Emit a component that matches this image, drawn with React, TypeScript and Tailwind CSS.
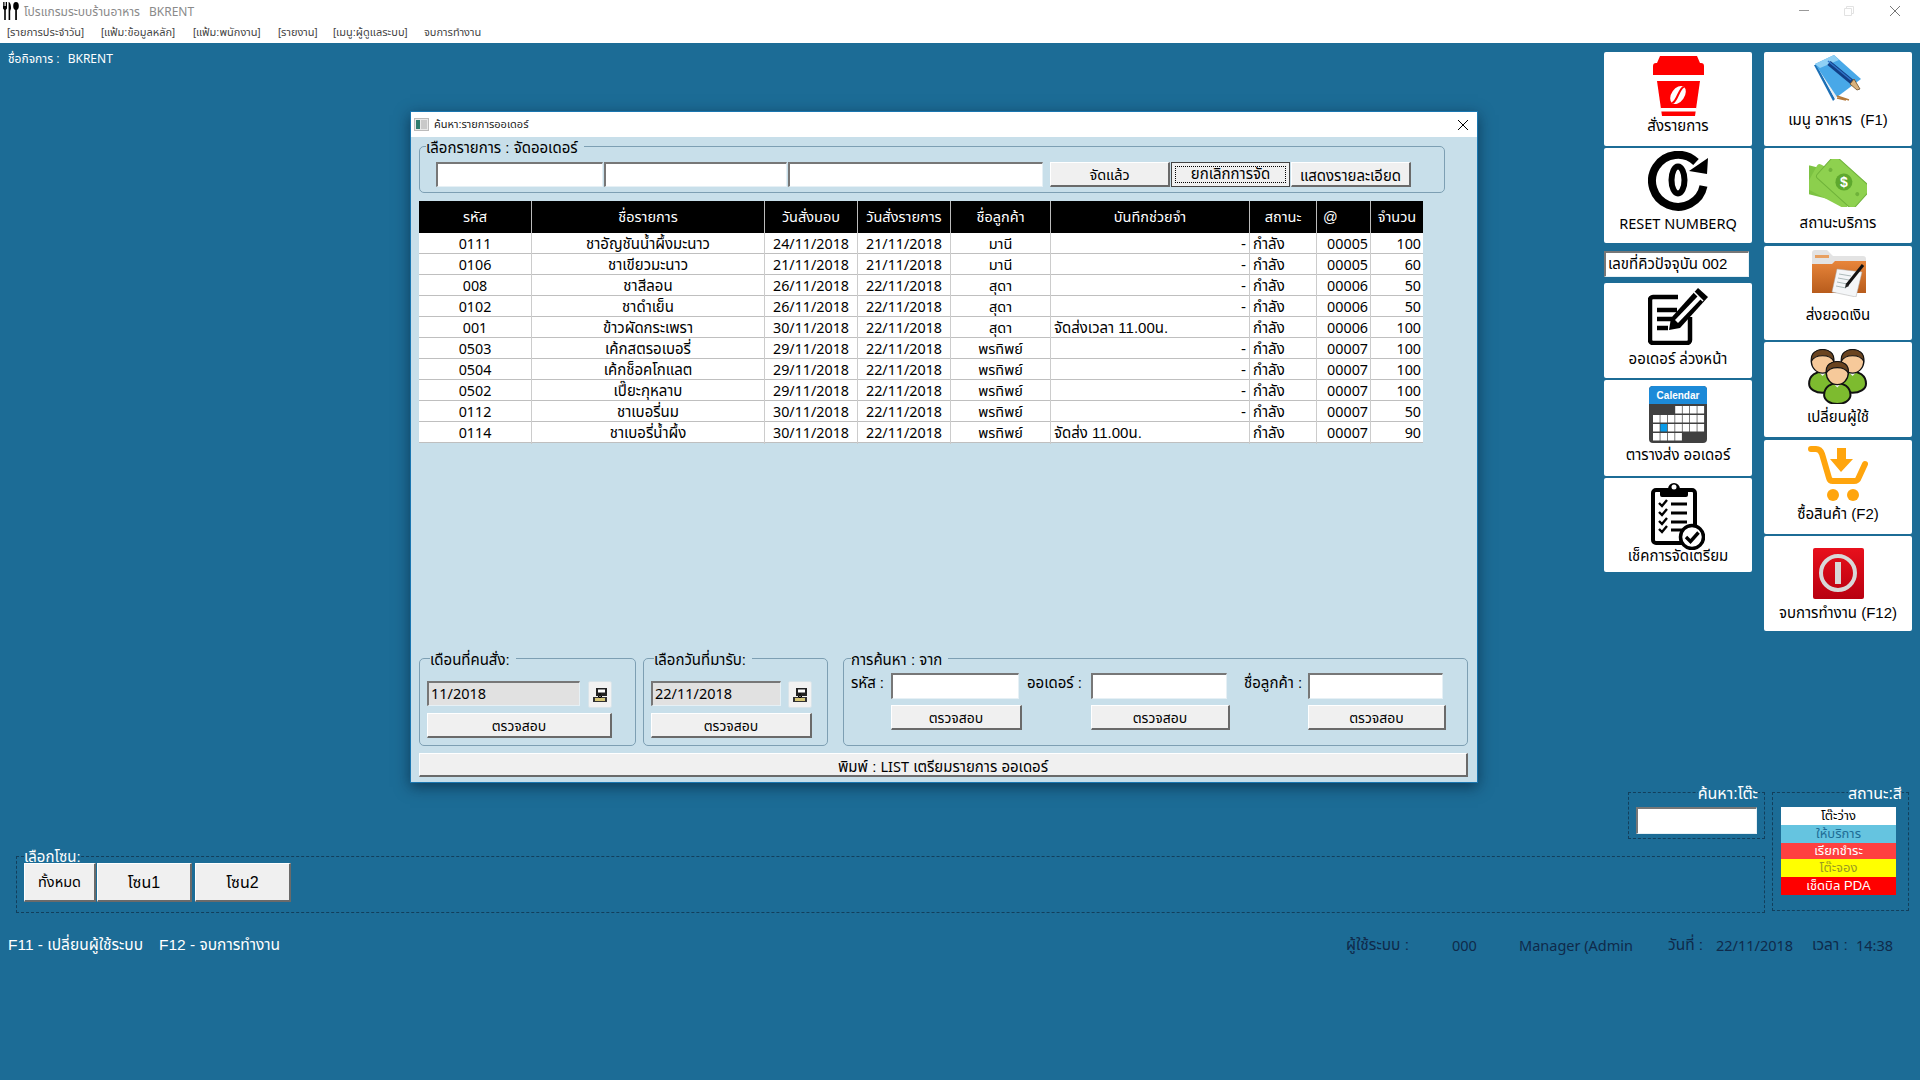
import type { ReactNode } from "react";

const FONT = "font-['Liberation_Sans','Noto_Sans_Thai','Noto_Sans',sans-serif]";
const LATIN = "font-['Noto_Sans','Noto_Sans_Thai',sans-serif]";

const sunken =
  "border-t-2 border-l-2 border-r border-b border-t-[#777] border-l-[#777] border-r-[#e6f0f5] border-b-[#e6f0f5]";
const raised =
  "pt-[2px] border-t border-l border-r-2 border-b-2 border-t-white border-l-white border-r-[#6a6a6a] border-b-[#6a6a6a] bg-[#f0f0f0]";

const menus = [
  { label: "[รายการประจำวัน]", w: "w-[94px]" },
  { label: "[แฟ้ม:ข้อมูลหลัก]", w: "w-[92px]" },
  { label: "[แฟ้ม:พนักงาน]", w: "w-[85px]" },
  { label: "[รายงาน]", w: "w-[55px]" },
  { label: "[เมนู:ผู้ดูแลระบบ]", w: "w-[91px]" },
  { label: "จบการทำงาน", w: "w-[70px]" },
];

const columns = "grid grid-cols-[113px_233px_93px_93px_100px_199px_67px_54px_52px]";

const rows = [
  ["0111", "ชาอัญชันน้ำผึ้งมะนาว", "24/11/2018", "21/11/2018", "มานี", "", "00005", "100"],
  ["0106", "ชาเขียวมะนาว", "21/11/2018", "21/11/2018", "มานี", "", "00005", "60"],
  ["008", "ชาสีลอน", "26/11/2018", "22/11/2018", "สุดา", "", "00006", "50"],
  ["0102", "ชาดำเย็น", "26/11/2018", "22/11/2018", "สุดา", "", "00006", "50"],
  ["001", "ข้าวผัดกระเพรา", "30/11/2018", "22/11/2018", "สุดา", "จัดส่งเวลา 11.00น.", "00006", "100"],
  ["0503", "เค้กสตรอเบอรี่", "29/11/2018", "22/11/2018", "พรทิพย์", "", "00007", "100"],
  ["0504", "เค้กช็อคโกแลต", "29/11/2018", "22/11/2018", "พรทิพย์", "", "00007", "100"],
  ["0502", "เปี๊ยะกุหลาบ", "29/11/2018", "22/11/2018", "พรทิพย์", "", "00007", "100"],
  ["0112", "ชาเบอรี่นม", "30/11/2018", "22/11/2018", "พรทิพย์", "", "00007", "50"],
  ["0114", "ชาเบอรี่น้ำผึ้ง", "30/11/2018", "22/11/2018", "พรทิพย์", "จัดส่ง 11.00น.", "00007", "90"],
];

const headers = ["รหัส", "ชื่อรายการ", "วันสั่งมอบ", "วันสั่งรายการ", "ชื่อลูกค้า", "บันทึกช่วยจำ", "สถานะ", "@", "จำนวน"];

function Cross({ className }: { className: string }) {
  return (
    <svg viewBox="0 0 10 10" className={`h-[10px] w-[10px] ${className}`}>
      <path d="M0 0l10 10M10 0 0 10" stroke="currentColor" strokeWidth="1" fill="none" />
    </svg>
  );
}

function CutleryIcon() {
  return (
    <svg viewBox="0 0 16 18" className="h-[18px] w-4 shrink-0" fill="#000">
      <path d="M0 0h.8v4h.7V0h.8v4h.7V0H4v6.500L2.800 8v10H1.200V8L0 6.500z" />
      <path d="M6 0c1.600.8 2 3.500 2 6.500L7.200 9v9H5.600V0z" />
      <ellipse cx="13" cy="4" rx="2.800" ry="4" />
      <rect x="12.200" y="6" width="1.700" height="12" />
    </svg>
  );
}

function CupIcon() {
  return (
    <svg viewBox="0 0 51 60" className="h-[60px] w-[51px]">
      <path fill="#f00" d="M7 0h37l3 7h1a3 3 0 0 1 3 3v9H0v-9a3 3 0 0 1 3-3h1z" />
      <path fill="#f00" d="M4 25h43l-5 35H9z" />
      <rect x="8" y="52" width="35" height="3.500" fill="#fff" />
      <g transform="rotate(35 25 39)">
        <ellipse cx="25" cy="39" rx="6.500" ry="10" fill="#fff" />
        <path d="M25 29c-3 5 3 15 0 20" stroke="#f00" strokeWidth="2" fill="none" />
      </g>
    </svg>
  );
}

function BookIcon() {
  return (
    <svg viewBox="0 0 48 46" className="h-[46px] w-12">
      <path fill="#1c6fb5" d="M0 10 19 46l2-2L3 10z" />
      <path fill="#e8eef2" d="M3 11 21 44l2-3L6 10z" />
      <path fill="#48a8e8" d="M1 9 20 0l27 24-24 18z" />
      <path fill="#8fd0f5" d="M1 9 20 0l5 5L6 13z" />
      <path stroke="#123f86" strokeWidth="5" d="M15 8 38 27" />
      <path stroke="#2f74c8" strokeWidth="1.500" d="M14 6 37 25" />
      <path fill="#d9b27c" stroke="#6b4a22" strokeWidth=".8" d="m36 29 4-5 6 10-3 1z" />
      <path stroke="#b5793a" strokeWidth="1.500" d="m23 41 12 4M23 43l9 2" />
    </svg>
  );
}

function ResetIcon() {
  return (
    <svg viewBox="0 0 60 60" className="h-[60px] w-[60px]">
      <path d="M55.500 35A26 26 0 1 1 48 11" fill="none" stroke="#000" strokeWidth="8" />
      <path d="M60 7 59 23 41 20z" />
      <ellipse cx="30" cy="29" rx="6.500" ry="13.500" fill="none" stroke="#000" strokeWidth="6" />
    </svg>
  );
}

function MoneyIcon() {
  return (
    <svg viewBox="0 0 58 48" className="h-12 w-[58px]">
      <g transform="rotate(42 30 24)">
        <rect x="-2" y="20" width="46" height="28" rx="3" fill="#7cc242" transform="rotate(-28 20 34)" />
        <rect x="4" y="17" width="46" height="28" rx="3" fill="#8ccf4d" transform="rotate(-14 27 31)" />
        <rect x="8" y="6" width="50" height="29" rx="3" fill="#8ed14f" stroke="#6fb23a" />
        <circle cx="33" cy="20" r="8.500" fill="#5ea82e" />
        <circle cx="15" cy="20" r="2" fill="#6fb23a" />
        <circle cx="51" cy="20" r="2" fill="#6fb23a" />
        <text x="33" y="25" textAnchor="middle" fontSize="14" fontWeight="700" fill="#fff" transform="rotate(-42 33 20)">
          $
        </text>
      </g>
    </svg>
  );
}

function FolderIcon() {
  return (
    <svg viewBox="0 0 55 47" className="h-[47px] w-[55px]">
      <defs>
        <linearGradient id="folder" x1="0" y1="0" x2="0" y2="1">
          <stop offset="0" stopColor="#e8853a" />
          <stop offset="1" stopColor="#b85c1c" />
        </linearGradient>
      </defs>
      <path fill="#e3e3e3" d="M1 3a3 3 0 0 1 3-3h12l6 6h30a3 3 0 0 1 3 3v10H1z" />
      <rect x="4" y="5" width="14" height="3" fill="#e8a060" />
      <path fill="url(#folder)" d="M1 14h20l3-3h31v32H1z" />
      <path fill="#f4f6f8" stroke="#aaa" strokeWidth=".5" d="m26 19 25 3-6 25-24-5z" />
      <path stroke="#9aa" strokeWidth=".8" d="m28 24 12 2M27 28l11 2M26 32l10 2M25 36l10 2" />
      <path stroke="#111" strokeWidth="3" d="M52 15 36 35" />
      <path d="m35 33 3 3-4 2z" fill="#222" />
    </svg>
  );
}

function EditIcon() {
  return (
    <svg viewBox="0 0 60 57" className="h-[57px] w-[60px]">
      <path d="M30 9H5a3 3 0 0 0-3 3v40a3 3 0 0 0 3 3h34a3 3 0 0 0 3-3V29" fill="none" stroke="#000" strokeWidth="4.500" />
      <path d="M9 22h20M9 31h15M9 40h11" stroke="#000" strokeWidth="4.500" />
      <path d="M50 0 60 9 32 40 21 42l2-12z" fill="#000" />
      <path d="M27 32 50 8l3 3-23 24z" fill="#fff" />
      <path d="M46 4 55 13" stroke="#fff" strokeWidth="1.500" />
    </svg>
  );
}

function CalendarIcon() {
  const cells = [
    [0, 0, 0, 1, 1, 1, 1],
    [1, 1, 1, 1, 1, 1, 1],
    [1, 2, 1, 1, 1, 1, 1],
    [1, 1, 1, 1, 0, 0, 0],
  ];
  return (
    <svg viewBox="0 0 58 57" className="h-[57px] w-[58px]">
      <rect width="58" height="57" rx="4" fill="#404040" />
      <path d="M0 18V4a4 4 0 0 1 4-4h50a4 4 0 0 1 4 4v14z" fill="#1c8ad8" />
      <text x="29" y="13" textAnchor="middle" fontSize="10" fontWeight="700" fill="#fff" fontFamily="Liberation Sans, sans-serif">
        Calendar
      </text>
      {cells.map((row, r) =>
        row.map((c, i) =>
          c ? (
            <rect
              key={`${r}-${i}`}
              x={4 + i * 7.4}
              y={20 + r * 9}
              width="6.700"
              height="7.500"
              fill={c === 2 ? "#0a9be8" : "#fff"}
            />
          ) : null,
        ),
      )}
    </svg>
  );
}

function Person({ x, y, s = 1 }: { x: number; y: number; s?: number }) {
  return (
    <g transform={`translate(${x} ${y}) scale(${s})`}>
      <path d="M1 31c0-8 7-11 12-11s12 3 12 11c0 5-6 8-12 8S1 36 1 31z" fill="#7dbb2f" stroke="#111" strokeWidth="1.800" />
      <path d="m9 20 4 4 4-4z" fill="#f4f4f4" />
      <ellipse cx="13" cy="11" rx="10" ry="10.500" fill="#f6c99a" stroke="#111" strokeWidth="1.200" />
      <path d="M3 11C2 3 8 .5 13 .5S24 3 23 11c-2-4-5-5-10-5S5 7 3 11z" fill="#6a4420" stroke="#111" strokeWidth="1" />
    </g>
  );
}

function UsersIcon() {
  return (
    <svg viewBox="0 0 60 55" className="h-[55px] w-[60px]">
      <Person x={0} y={0} s={1.12} />
      <Person x={30} y={0} s={1.12} />
      <Person x={15} y={12} s={1.1} />
    </svg>
  );
}

function CartIcon() {
  return (
    <svg viewBox="0 0 60 57" className="h-[57px] w-[60px]">
      <path d="M3 4h5c3 0 5 2 6 5l7 24a4 4 0 0 0 4 3h21c3 0 4-1 5-4l6-13" fill="none" stroke="#ffa50d" strokeWidth="6" strokeLinecap="round" />
      <path d="M29 3h9v11h7L33 27 22 14h7z" fill="#ffa50d" />
      <circle cx="25" cy="50" r="6" fill="#ffa50d" />
      <circle cx="45" cy="50" r="6" fill="#ffa50d" />
    </svg>
  );
}

function ChecklistIcon() {
  return (
    <svg viewBox="0 0 54 69" className="h-[69px] w-[54px]">
      <rect x="2" y="9" width="42" height="53" rx="3" fill="#fff" stroke="#000" strokeWidth="4" />
      <path d="M9 14V8h8a6 6 0 0 1 12 0h8v6a2 2 0 0 1-2 2H11a2 2 0 0 1-2-2z" fill="#000" />
      <circle cx="23" cy="6" r="2.500" fill="#fff" />
      {[22, 31, 40, 48].map((y) => (
        <g key={y}>
          <path d={`m8 ${y} 3 3 5-6`} fill="none" stroke="#000" strokeWidth="2.400" />
          <path d={`M20 ${y + 1}h16`} stroke="#000" strokeWidth="3" />
        </g>
      ))}
      <circle cx="41" cy="56" r="11.500" fill="#fff" stroke="#000" strokeWidth="3.500" />
      <path d="m35 56 4.500 4.500 8-9" fill="none" stroke="#000" strokeWidth="3.400" />
    </svg>
  );
}

function PowerIcon() {
  return (
    <svg viewBox="0 0 53 53" className="h-[53px] w-[53px]">
      <defs>
        <linearGradient id="power" x1="0" y1="0" x2="0" y2="1">
          <stop offset="0" stopColor="#e8101c" />
          <stop offset="1" stopColor="#b80010" />
        </linearGradient>
      </defs>
      <rect x="1" y="1" width="51" height="51" rx="2" fill="url(#power)" />
      <circle cx="26" cy="26" r="17" fill="none" stroke="#d8d8d8" strokeWidth="4" />
      <rect x="23" y="15" width="6" height="22" fill="#d8d8d8" />
    </svg>
  );
}

function CalendarPick() {
  return (
    <svg viewBox="0 0 16 16" className="h-4 w-4">
      <rect x="4" y="1" width="11" height="8" fill="#222" />
      <rect x="6" y="2.500" width="7" height="3" fill="#fff" />
      <path d="M1 10h14v5H1z" fill="#333" />
      <rect x="3" y="11" width="10" height="3" fill="#d8c878" />
      <path d="M8 6v5M6 9l2 2 2-2" stroke="#000" fill="none" />
    </svg>
  );
}

function Tile({ icon, label, className }: { icon: ReactNode; label: string; className: string }) {
  return (
    <button
      type="button"
      className={`flex w-[148px] flex-col items-center justify-start rounded-[2px] bg-white text-[15px] leading-5 text-black ${className}`}
    >
      {icon}
      <span className="whitespace-pre">{label}</span>
    </button>
  );
}

function GroupBox({
  title,
  className,
  legend,
  children,
}: {
  title: string;
  className: string;
  legend: string;
  children: ReactNode;
}) {
  return (
    <fieldset className={`rounded-[5px] border border-[#7d9fb3] ${className}`}>
      <legend className={`h-5 pr-[6px] text-[15px] leading-[23px] text-black ${legend}`}>{title}</legend>
      {children}
    </fieldset>
  );
}

function DateField({ value }: { value: string }) {
  return <div className={`h-[25px] bg-[#e1e1e1] pl-[2px] text-[14.500px] leading-[21px] ${LATIN} ${sunken}`}>{value}</div>;
}

function PickButton() {
  return (
    <button type="button" className="ml-auto flex h-[27px] w-6 items-center justify-center rounded-[2px] border border-[#d8e4ea] bg-[#f2f2f2]">
      <CalendarPick />
    </button>
  );
}

function CheckButton({ className }: { className: string }) {
  return (
    <button type="button" className={`h-[25px] text-[14px] leading-5 text-black ${raised} ${className}`}>
      ตรวจสอบ
    </button>
  );
}

function OrderDialog() {
  return (
    <section className="absolute left-[410px] top-[111px] flex h-[672px] w-[1068px] flex-col border border-[#1a76b0] bg-[#c8dfea] shadow-[0_4px_14px_rgba(0,20,40,0.55)]">
      <header className="flex h-[25px] shrink-0 items-center bg-white pl-[3px]">
        <svg viewBox="0 0 15 13" className="h-[13px] w-[15px]">
          <rect x=".5" y=".5" width="14" height="12" fill="#e8e8e8" stroke="#bbb" />
          <rect x="2" y="2" width="4" height="9" fill="#2f7d6e" />
          <rect x="7" y="2" width="6" height="9" fill="#c9c9c9" />
        </svg>
        <span className="ml-[5px] text-[11px] text-[#222]">ค้นหา:รายการออเดอร์</span>
        <Cross className="ml-auto mr-[9px] text-black" />
      </header>

      <div className="flex flex-1 flex-col px-[8px]">
        <GroupBox title="เลือกรายการ : จัดออเดอร์" legend="-ml-[10px]" className="-mt-px w-[1026px] pb-[5px] pl-4 pt-[6px]">
          <div className="flex">
            <div className={`h-[25px] w-[167px] bg-white ${sunken}`} />
            <div className={`ml-px h-[25px] w-[183px] bg-white ${sunken}`} />
            <div className={`ml-px h-[25px] w-[255px] bg-white ${sunken}`} />
            <button type="button" className={`ml-[7px] h-[25px] w-[120px] text-[14.500px] text-black ${raised}`}>
              จัดแล้ว
            </button>
            <button type="button" className="ml-px flex h-[25px] w-[119px] items-center justify-center border border-[#444] bg-[#f0f0f0] p-[3px] text-[15px] text-black">
              <span className="flex h-full w-full items-center justify-center border border-dotted border-black">ยกเลิกการจัด</span>
            </button>
            <button type="button" className={`ml-px h-[25px] w-[120px] whitespace-nowrap text-[15px] text-black ${raised}`}>
              แสดงรายละเอียด
            </button>
          </div>
        </GroupBox>

        <div className="mt-2 w-[1004px] text-[15px] leading-[22px]">
          <div className={`${columns} h-[32px] bg-black text-[14.500px] leading-[22px] text-white`}>
            {headers.map((h, i) => (
              <div key={h} className={`flex items-center border-r border-[#bbb] last:border-r-0 ${i === 7 ? "pl-[6px]" : "justify-center"}`}>
                {h}
              </div>
            ))}
          </div>
          {rows.map((r, idx) => {
            const note = r[5];
            return (
              <div key={idx} className={`${columns} h-[21px] border-b border-[#bfbfbf] bg-white text-black`}>
                <div className={`border-r border-[#ccc] text-center text-[14.300px] ${LATIN}`}>{r[0]}</div>
                <div className="border-r border-[#ccc] text-center">{r[1]}</div>
                <div className={`border-r border-[#ccc] text-center text-[14.300px] ${LATIN}`}>{r[2]}</div>
                <div className={`border-r border-[#ccc] text-center text-[14.300px] ${LATIN}`}>{r[3]}</div>
                <div className="border-r border-[#ccc] text-center text-[14.500px]">{r[4]}</div>
                <div className={`border-r border-[#ccc] px-[3px] ${note ? "text-left" : "text-right"}`}>{note || "-"}</div>
                <div className="border-r border-[#ccc] pl-[3px]">กำลัง</div>
                <div className={`border-r border-[#ccc] pr-[2px] text-right text-[14.300px] ${LATIN}`}>{r[6]}</div>
                <div className={`pr-[2px] text-right text-[14.300px] ${LATIN}`}>{r[7]}</div>
              </div>
            );
          })}
        </div>

        <div className="mt-auto flex items-start">
          <GroupBox title="เดือนที่คนสั่ง:" legend="ml-[3px]" className="h-[98px] w-[217px] pl-[7px] pr-[23px] pt-[13px]">
            <div className="grid grid-cols-[153px_1fr] gap-y-[5px]">
              <DateField value="11/2018" />
              <PickButton />
              <CheckButton className="col-span-2" />
            </div>
          </GroupBox>
          <GroupBox title="เลือกวันที่มารับ:" legend="ml-[3px]" className="ml-[7px] h-[98px] w-[185px] pl-[7px] pr-[15px] pt-[13px]">
            <div className="grid grid-cols-[130px_1fr] gap-y-[5px]">
              <DateField value="22/11/2018" />
              <PickButton />
              <CheckButton className="col-span-2" />
            </div>
          </GroupBox>
          <GroupBox title="การค้นหา : จาก" legend="ml-0" className="ml-[15px] h-[98px] w-[625px] pl-[7px] pt-[5px]">
            <div className="grid grid-cols-[40px_131px_69px_139px_78px_138px] gap-y-[6px] text-[15px] text-black">
              <span className="leading-5">รหัส :</span>
              <div className={`h-[26px] w-[128px] bg-white ${sunken}`} />
              <span className="pl-[5px] leading-5">ออเดอร์ :</span>
              <div className={`h-[26px] w-[136px] bg-white ${sunken}`} />
              <span className="pl-[14px] leading-5">ชื่อลูกค้า :</span>
              <div className={`h-[26px] w-[135px] bg-white ${sunken}`} />
              <CheckButton className="col-start-2" />
              <CheckButton className="col-start-4" />
              <CheckButton className="col-start-6" />
            </div>
          </GroupBox>
        </div>

        <button type="button" className={`mb-[5px] mt-[7px] h-6 w-[1049px] text-[15px] leading-5 text-black ${raised}`}>
          พิมพ์ : <span className={`text-[14.500px] ${LATIN}`}>LIST</span> เตรียมรายการ ออเดอร์
        </button>
      </div>
    </section>
  );
}

export default function App() {
  return (
    <div className={`relative flex h-[1080px] w-[1920px] flex-col overflow-hidden bg-[#1c6c96] ${FONT}`}>
      <div className="flex h-[21px] shrink-0 items-center bg-white pl-[3px]">
        <CutleryIcon />
        <span className="ml-[5px] mt-[2px] text-[12px] text-[#8a8a8a]">
          โปรแกรมระบบร้านอาหาร<span className={`ml-[9px] ${LATIN}`}>BKRENT</span>
        </span>
        <div className="ml-auto flex items-center">
          <span className="mr-[35px] h-px w-[10px] bg-[#999]" />
          <svg viewBox="0 0 10 10" className="mr-9 h-[10px] w-[10px]" fill="none" stroke="#e2e2e2">
            <path d="M.5 2.500h7v7h-7zM2.500 2.500v-2h7v7h-2" />
          </svg>
          <Cross className="mr-5 text-[#777]" />
        </div>
      </div>
      <nav className="flex h-[22px] shrink-0 items-center bg-white pl-[7px] text-[11px] text-[#444]">
        {menus.map((m) => (
          <span key={m.label} className={`${m.w} whitespace-nowrap`}>
            {m.label}
          </span>
        ))}
      </nav>

      <main className="flex flex-1 flex-col">
        <div className="flex h-[739px] shrink-0 justify-between pr-2">
          <p className="pl-2 pt-[7px] text-[12px] leading-[18px] text-white">
            ชื่อกิจการ :<span className={`ml-[8px] ${LATIN}`}>BKRENT</span>
          </p>
          <div className="flex gap-3 pt-[9px]">
            <div className="flex flex-col items-start">
              <Tile icon={<CupIcon />} label="สั่งรายการ" className="h-[94px] pt-1" />
              <Tile icon={<ResetIcon />} label="RESET NUMBERQ" className={`mt-[2px] h-[95px] pt-[3px] [&>span]:mt-[2px] [&>span]:text-[14.500px] ${LATIN}`} />
              <div className={`mt-2 h-[26px] w-[145px] bg-white pl-[2px] text-[15px] leading-[22px] text-black ${sunken}`}>
                เลขที่คิวปัจจุบัน 002
              </div>
              <Tile icon={<EditIcon />} label="ออเดอร์ ล่วงหน้า" className="mt-[6px] h-[95px] pt-[5px] [&>span]:mt-1" />
              <Tile icon={<CalendarIcon />} label="ตารางส่ง ออเดอร์" className="mt-[2px] h-[96px] pt-[6px] [&>span]:mt-[2px]" />
              <Tile icon={<ChecklistIcon />} label="เช็คการจัดเตรียม" className="mt-[2px] h-[94px] pt-[3px] [&>span]:-mt-[4px]" />
            </div>
            <div className="flex flex-col">
              <Tile icon={<BookIcon />} label="เมนู อาหาร  (F1)" className="h-[94px] pt-[3px] [&>span]:mt-[9px]" />
              <Tile icon={<MoneyIcon />} label="สถานะบริการ" className="mt-[2px] h-[95px] pt-[11px] [&>span]:mt-[6px]" />
              <Tile icon={<FolderIcon />} label="ส่งยอดเงิน" className="mt-[3px] h-[94px] pt-[4px] [&>span]:mt-2" />
              <Tile icon={<UsersIcon />} label="เปลี่ยนผู้ใช้" className="mt-[2px] h-[95px] pt-[7px] [&>span]:mt-[3px]" />
              <Tile icon={<CartIcon />} label="ซื้อสินค้า (F2)" className="mt-[3px] h-[94px] pt-[5px] [&>span]:mt-[2px]" />
              <Tile icon={<PowerIcon />} label="จบการทำงาน (F12)" className="mt-[2px] h-[95px] pt-[11px] [&>span]:mt-[3px]" />
            </div>
          </div>
        </div>

        <div className="flex pl-4">
          <div className="flex w-[1749px] flex-col">
            <fieldset className="h-[57px] w-[137px] self-end border border-dashed border-[#123f5c] pl-[7px]">
              <legend className="ml-auto mr-[6px] h-5 text-[16px] leading-[23px] text-white">ค้นหา:โต๊ะ</legend>
              <div className={`mt-[5px] h-[27px] w-[121px] bg-white ${sunken}`} />
            </fieldset>
            <fieldset className="mt-[9px] h-[65px] border border-dashed border-[#123f5c] pl-[7px]">
              <legend className="h-4 text-[15px] leading-[18px] text-white">เลือกโซน:</legend>
              <div className="-mt-px flex text-black">
                <button type="button" className={`h-[39px] w-[72px] text-[14.500px] ${raised}`}>ทั้งหมด</button>
                <button type="button" className={`ml-px h-[39px] w-[95px] text-[16px] ${raised}`}>โซน1</button>
                <button type="button" className={`ml-[3px] h-[39px] w-[96px] text-[16px] ${raised}`}>โซน2</button>
              </div>
            </fieldset>
          </div>
          <fieldset className="ml-[7px] h-[129px] w-[137px] border border-dashed border-[#123f5c] pl-2">
            <legend className="ml-auto mr-[6px] h-5 text-[16px] leading-[23px] text-white">สถานะ:สี</legend>
            <div className="mt-[5px] w-[115px] text-center text-[13px]">
              <div className="h-[18px] bg-white leading-[18px] text-black">โต๊ะว่าง</div>
              <div className="h-[18px] bg-[#65c4e0] leading-[18px] text-[#1d6c96]">ให้บริการ</div>
              <div className="h-4 bg-[#ff4040] leading-4 text-white">เรียกชำระ</div>
              <div className="h-[18px] bg-[#ffff00] leading-[18px] text-[#9a9a20]">โต๊ะจอง</div>
              <div className="h-[18px] bg-[#ff0000] leading-[18px] text-white">เช็ดบิล PDA</div>
            </div>
          </fieldset>
        </div>

        <footer className="mt-[22px] flex h-5 items-center justify-between pl-2 pr-2 text-[15.500px] leading-5">
          <div className="flex text-white">
            <span className="w-[151px] whitespace-nowrap">F11 - เปลี่ยนผู้ใช้ระบบ</span>
            <span>F12 - จบการทำงาน</span>
          </div>
          <div className="flex whitespace-nowrap text-[#0f2a4a]">
            <span className="w-[106px]">ผู้ใช้ระบบ :</span>
            <span className={`w-[67px] text-[14.500px] ${LATIN}`}>000</span>
            <span className={`w-[149px] text-[14.500px] ${LATIN}`}>Manager (Admin</span>
            <span className="w-[48px]">วันที่ :</span>
            <span className={`w-[96px] text-[14.500px] ${LATIN}`}>22/11/2018</span>
            <span className="w-[44px]">เวลา :</span>
            <span className={`w-[56px] text-[14.500px] ${LATIN}`}>14:38</span>
          </div>
        </footer>
      </main>

      <OrderDialog />
    </div>
  );
}
